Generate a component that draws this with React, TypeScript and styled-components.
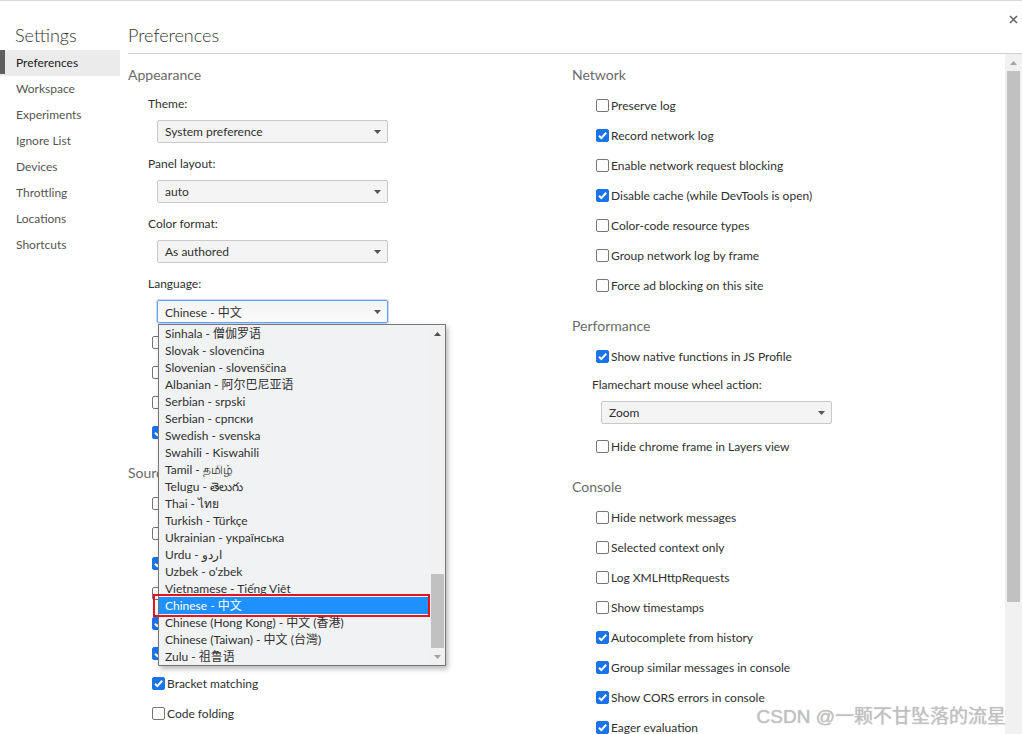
import styled, { createGlobalStyle } from "styled-components";

const GlobalStyle = createGlobalStyle`
  html, body {
    margin: 0;
    padding: 0;
    background: #fff;
  }
  body {
    font-family: Lato, "Noto Sans CJK SC", sans-serif;
    font-size: 12px;
    color: #303030;
  }
`;

const Frame = styled.div`
  position: relative;
  width: 1022px;
  height: 734px;
  box-sizing: border-box;
  border-top: 1px solid #dcdcdc;
  display: flex;
  overflow: hidden;
`;

const Sidebar = styled.nav`
  width: 120px;
  flex-shrink: 0;
  display: flex;
  flex-direction: column;
`;

const SidebarTitle = styled.div`
  padding: 22px 0 3px 15px;
  font-size: 18px;
  font-weight: 300;
  line-height: 24px;
  color: #333;
`;

const NavItem = styled.div<{ $active?: boolean }>`
  position: relative;
  height: 26px;
  line-height: 26px;
  padding-left: 16px;
  color: ${(p) => (p.$active ? "#202124" : "#555")};
  background: ${(p) => (p.$active ? "#ebebeb" : "transparent")};

  &::before {
    content: "";
    display: ${(p) => (p.$active ? "block" : "none")};
    position: absolute;
    left: 0;
    top: 0;
    bottom: 2px;
    width: 5px;
    background: #5f5f5f;
  }
`;

const Main = styled.main`
  flex: 1;
  margin-left: 8px;
  display: flex;
  flex-direction: column;
  min-width: 0;
`;

const Header = styled.header`
  height: 53px;
  box-sizing: border-box;
  padding-top: 22px;
  border-bottom: 1px solid #cfcfcf;
  font-size: 18px;
  font-weight: 300;
  line-height: 24px;
  color: #333;
`;

const CloseButton = styled.button`
  position: absolute;
  top: 12px;
  right: 3px;
  width: 12px;
  height: 12px;
  padding: 0;
  border: 0;
  background: none;
  display: flex;
  align-items: center;
  justify-content: center;
`;

const Body = styled.div`
  flex: 1;
  display: flex;
  min-height: 0;
`;

const Columns = styled.div`
  flex: 1;
  display: grid;
  grid-template-columns: 444px 1fr;
  align-items: start;
  padding-top: 11px;
  overflow: hidden;
`;

const Column = styled.div`
  display: flex;
  flex-direction: column;
  gap: 16px;
`;

const Section = styled.section`
  display: flex;
  flex-direction: column;
`;

const SectionTitle = styled.h2`
  margin: 0;
  font-size: 14px;
  font-weight: 400;
  line-height: 20px;
  color: #6b6b6b;
`;

const SectionBody = styled.div`
  margin-top: 5px;
  padding-left: 20px;
  display: flex;
  flex-direction: column;
`;

const Checks = styled.div<{ $shift?: number }>`
  display: flex;
  flex-direction: column;
  margin-top: ${(p) => p.$shift ?? 0}px;
`;

const CheckRow = styled.label`
  height: 30px;
  display: flex;
  align-items: center;
  gap: 2px;
  padding-left: 4px;
`;

const Box = styled.span<{ $checked?: boolean }>`
  width: 13px;
  height: 13px;
  box-sizing: border-box;
  border-radius: 2px;
  border: 1px solid ${(p) => (p.$checked ? "#1a73e8" : "#767676")};
  background: ${(p) => (p.$checked ? "#1a73e8" : "#fff")};
  display: flex;
  align-items: center;
  justify-content: center;
  flex-shrink: 0;
`;

const Field = styled.div`
  position: relative;
  padding: 6px 0 7px;
  display: flex;
  flex-direction: column;
`;

const FieldLabel = styled.div`
  line-height: 16px;
`;

const SelectWrap = styled.div`
  position: relative;
  margin: 8px 0 0 9px;
  width: 231px;
`;

const SelectBox = styled.div<{ $focused?: boolean }>`
  height: 23px;
  box-sizing: border-box;
  padding: 0 6px 0 7px;
  display: flex;
  align-items: center;
  justify-content: space-between;
  border-radius: 2px;
  border: 1px solid ${(p) => (p.$focused ? "#6ea2ef" : "#c9c9c9")};
  box-shadow: ${(p) => (p.$focused ? "0 0 0 1px #c4dafb" : "none")};
  background: ${(p) => (p.$focused ? "linear-gradient(#f3f3f3, #fbfbfb)" : "#f4f4f4")};
  color: #303030;
`;

const Popup = styled.div`
  position: absolute;
  top: 24px;
  left: 1px;
  width: 288px;
  height: 342px;
  box-sizing: border-box;
  border: 1px solid #767676;
  background: #f1f2f4;
  box-shadow: 2px 3px 5px rgba(0, 0, 0, 0.28);
  display: flex;
  z-index: 5;
`;

const Options = styled.ul`
  flex: 1;
  margin: 0;
  padding: 0;
  list-style: none;
`;

const Option = styled.li<{ $selected?: boolean }>`
  height: 17px;
  line-height: 17px;
  padding-left: 6px;
  white-space: nowrap;
  color: ${(p) => (p.$selected ? "#fff" : "#303030")};
  background: ${(p) => (p.$selected ? "#1e90ff" : "transparent")};
`;

const Marker = styled.div`
  position: absolute;
  left: -6px;
  top: 269px;
  width: 277px;
  height: 23px;
  box-sizing: border-box;
  border: 2px solid #e3141e;
  pointer-events: none;
`;

const ScrollTrack = styled.div<{ $width: number }>`
  width: ${(p) => p.$width}px;
  flex-shrink: 0;
  background: #f1f1f1;
  display: flex;
  flex-direction: column;
`;

const ScrollArrow = styled.div`
  height: 17px;
  flex-shrink: 0;
  display: flex;
  align-items: center;
  justify-content: center;
`;

const ScrollRail = styled.div<{ $end?: boolean }>`
  flex: 1;
  display: flex;
  flex-direction: column;
  justify-content: ${(p) => (p.$end ? "flex-end" : "flex-start")};
`;

const Thumb = styled.div<{ $height: number; $inset: number }>`
  height: ${(p) => p.$height}px;
  margin: 0 ${(p) => p.$inset}px;
  background: #c1c1c1;
`;

const Watermark = styled.div`
  position: absolute;
  right: 16px;
  bottom: 5px;
  font-family: "Liberation Sans", "Noto Sans CJK SC", sans-serif;
  font-size: 19px;
  line-height: 24px;
  color: rgba(195, 195, 195, 0.85);
  text-shadow: 0 0 1px rgba(110, 110, 110, 0.55);
  pointer-events: none;
`;

const Caret = ({ up, color = "#555" }: { up?: boolean; color?: string }) => (
  <svg width="7" height="4" viewBox="0 0 7 4">
    <path d={up ? "M0 4h7L3.5 0z" : "M0 0h7L3.5 4z"} fill={color} />
  </svg>
);

const Check = ({ label, checked }: { label: string; checked?: boolean }) => (
  <CheckRow>
    <Box $checked={checked}>
      {checked && (
        <svg width="11" height="11" viewBox="0 0 11 11">
          <path d="M2 5.8l2.3 2.3L9.2 2.8" stroke="#fff" strokeWidth="2" fill="none" />
        </svg>
      )}
    </Box>
    {label}
  </CheckRow>
);

const languages = [
  "Sinhala - 僧伽罗语",
  "Slovak - slovenčina",
  "Slovenian - slovenščina",
  "Albanian - 阿尔巴尼亚语",
  "Serbian - srpski",
  "Serbian - српски",
  "Swedish - svenska",
  "Swahili - Kiswahili",
  "Tamil - தமிழ்",
  "Telugu - తెలుగు",
  "Thai - ไทย",
  "Turkish - Türkçe",
  "Ukrainian - українська",
  "Urdu - اردو",
  "Uzbek - o‘zbek",
  "Vietnamese - Tiếng Việt",
  "Chinese - 中文",
  "Chinese (Hong Kong) - 中文 (香港)",
  "Chinese (Taiwan) - 中文 (台灣)",
  "Zulu - 祖鲁语",
];

const nav = [
  "Preferences",
  "Workspace",
  "Experiments",
  "Ignore List",
  "Devices",
  "Throttling",
  "Locations",
  "Shortcuts",
];

const appearanceChecks: [string, boolean][] = [
  ["Sync settings", false],
  ["Enable Ctrl + 1-9 shortcut", false],
  ["Show what's new", false],
  ["Search as you type", true],
];

const sourcesChecks: [string, boolean][] = [
  ["Search in anonymous and content scripts", false],
  ["Automatically reveal files in sidebar", false],
  ["Enable JavaScript source maps", true],
  ["Tab moves focus", false],
  ["Detect indentation", true],
  ["Autocompletion", true],
  ["Bracket matching", true],
  ["Code folding", false],
];

const networkChecks: [string, boolean][] = [
  ["Preserve log", false],
  ["Record network log", true],
  ["Enable network request blocking", false],
  ["Disable cache (while DevTools is open)", true],
  ["Color-code resource types", false],
  ["Group network log by frame", false],
  ["Force ad blocking on this site", false],
];

const consoleChecks: [string, boolean][] = [
  ["Hide network messages", false],
  ["Selected context only", false],
  ["Log XMLHttpRequests", false],
  ["Show timestamps", false],
  ["Autocomplete from history", true],
  ["Group similar messages in console", true],
  ["Show CORS errors in console", true],
  ["Eager evaluation", true],
];

const Select = ({ value, focused }: { value: string; focused?: boolean }) => (
  <SelectBox $focused={focused}>
    <span>{value}</span>
    <Caret />
  </SelectBox>
);

export default function App() {
  return (
    <>
      <GlobalStyle />
      <Frame>
        <Sidebar>
          <SidebarTitle>Settings</SidebarTitle>
          {nav.map((n, i) => (
            <NavItem key={n} $active={i === 0}>
              {n}
            </NavItem>
          ))}
        </Sidebar>

        <Main>
          <Header>Preferences</Header>
          <Body>
            <Columns>
              <Column>
                <Section>
                  <SectionTitle>Appearance</SectionTitle>
                  <SectionBody>
                    <Field>
                      <FieldLabel>Theme:</FieldLabel>
                      <SelectWrap>
                        <Select value="System preference" />
                      </SelectWrap>
                    </Field>
                    <Field>
                      <FieldLabel>Panel layout:</FieldLabel>
                      <SelectWrap>
                        <Select value="auto" />
                      </SelectWrap>
                    </Field>
                    <Field>
                      <FieldLabel>Color format:</FieldLabel>
                      <SelectWrap>
                        <Select value="As authored" />
                      </SelectWrap>
                    </Field>
                    <Field>
                      <FieldLabel>Language:</FieldLabel>
                      <SelectWrap>
                        <Select value="Chinese - 中文" focused />
                        <Popup>
                          <Options>
                            {languages.map((l, i) => (
                              <Option key={l + i} $selected={l === "Chinese - 中文"}>
                                {l}
                              </Option>
                            ))}
                          </Options>
                          <ScrollTrack $width={15}>
                            <ScrollArrow>
                              <Caret up color="#505050" />
                            </ScrollArrow>
                            <ScrollRail $end>
                              <Thumb $height={74} $inset={1} />
                            </ScrollRail>
                            <ScrollArrow>
                              <Caret color="#a3a3a3" />
                            </ScrollArrow>
                          </ScrollTrack>
                          <Marker />
                        </Popup>
                      </SelectWrap>
                    </Field>
                  </SectionBody>
                  <SectionBody>
                    <Checks $shift={-8}>
                      {appearanceChecks.map(([l, c]) => (
                        <Check key={l} label={l} checked={c} />
                      ))}
                    </Checks>
                  </SectionBody>
                </Section>

                <Section>
                  <SectionTitle>Sources</SectionTitle>
                  <SectionBody>
                    {sourcesChecks.map(([l, c]) => (
                      <Check key={l} label={l} checked={c} />
                    ))}
                  </SectionBody>
                </Section>
              </Column>

              <Column>
                <Section>
                  <SectionTitle>Network</SectionTitle>
                  <SectionBody>
                    {networkChecks.map(([l, c]) => (
                      <Check key={l} label={l} checked={c} />
                    ))}
                  </SectionBody>
                </Section>

                <Section>
                  <SectionTitle>Performance</SectionTitle>
                  <SectionBody>
                    <Check label="Show native functions in JS Profile" checked />
                    <Field>
                      <FieldLabel>Flamechart mouse wheel action:</FieldLabel>
                      <SelectWrap>
                        <Select value="Zoom" />
                      </SelectWrap>
                    </Field>
                    <Check label="Hide chrome frame in Layers view" />
                  </SectionBody>
                </Section>

                <Section>
                  <SectionTitle>Console</SectionTitle>
                  <SectionBody>
                    {consoleChecks.map(([l, c]) => (
                      <Check key={l} label={l} checked={c} />
                    ))}
                  </SectionBody>
                </Section>
              </Column>
            </Columns>

            <ScrollTrack $width={17}>
              <ScrollArrow>
                <Caret up color="#a3a3a3" />
              </ScrollArrow>
              <ScrollRail>
                <Thumb $height={531} $inset={2} />
              </ScrollRail>
            </ScrollTrack>
          </Body>
        </Main>

        <CloseButton aria-label="Close">
          <svg width="9" height="9" viewBox="0 0 9 9">
            <path d="M1 1l7 7M8 1L1 8" stroke="#666" strokeWidth="1.6" />
          </svg>
        </CloseButton>

        <Watermark>CSDN @一颗不甘坠落的流星</Watermark>
      </Frame>
    </>
  );
}
